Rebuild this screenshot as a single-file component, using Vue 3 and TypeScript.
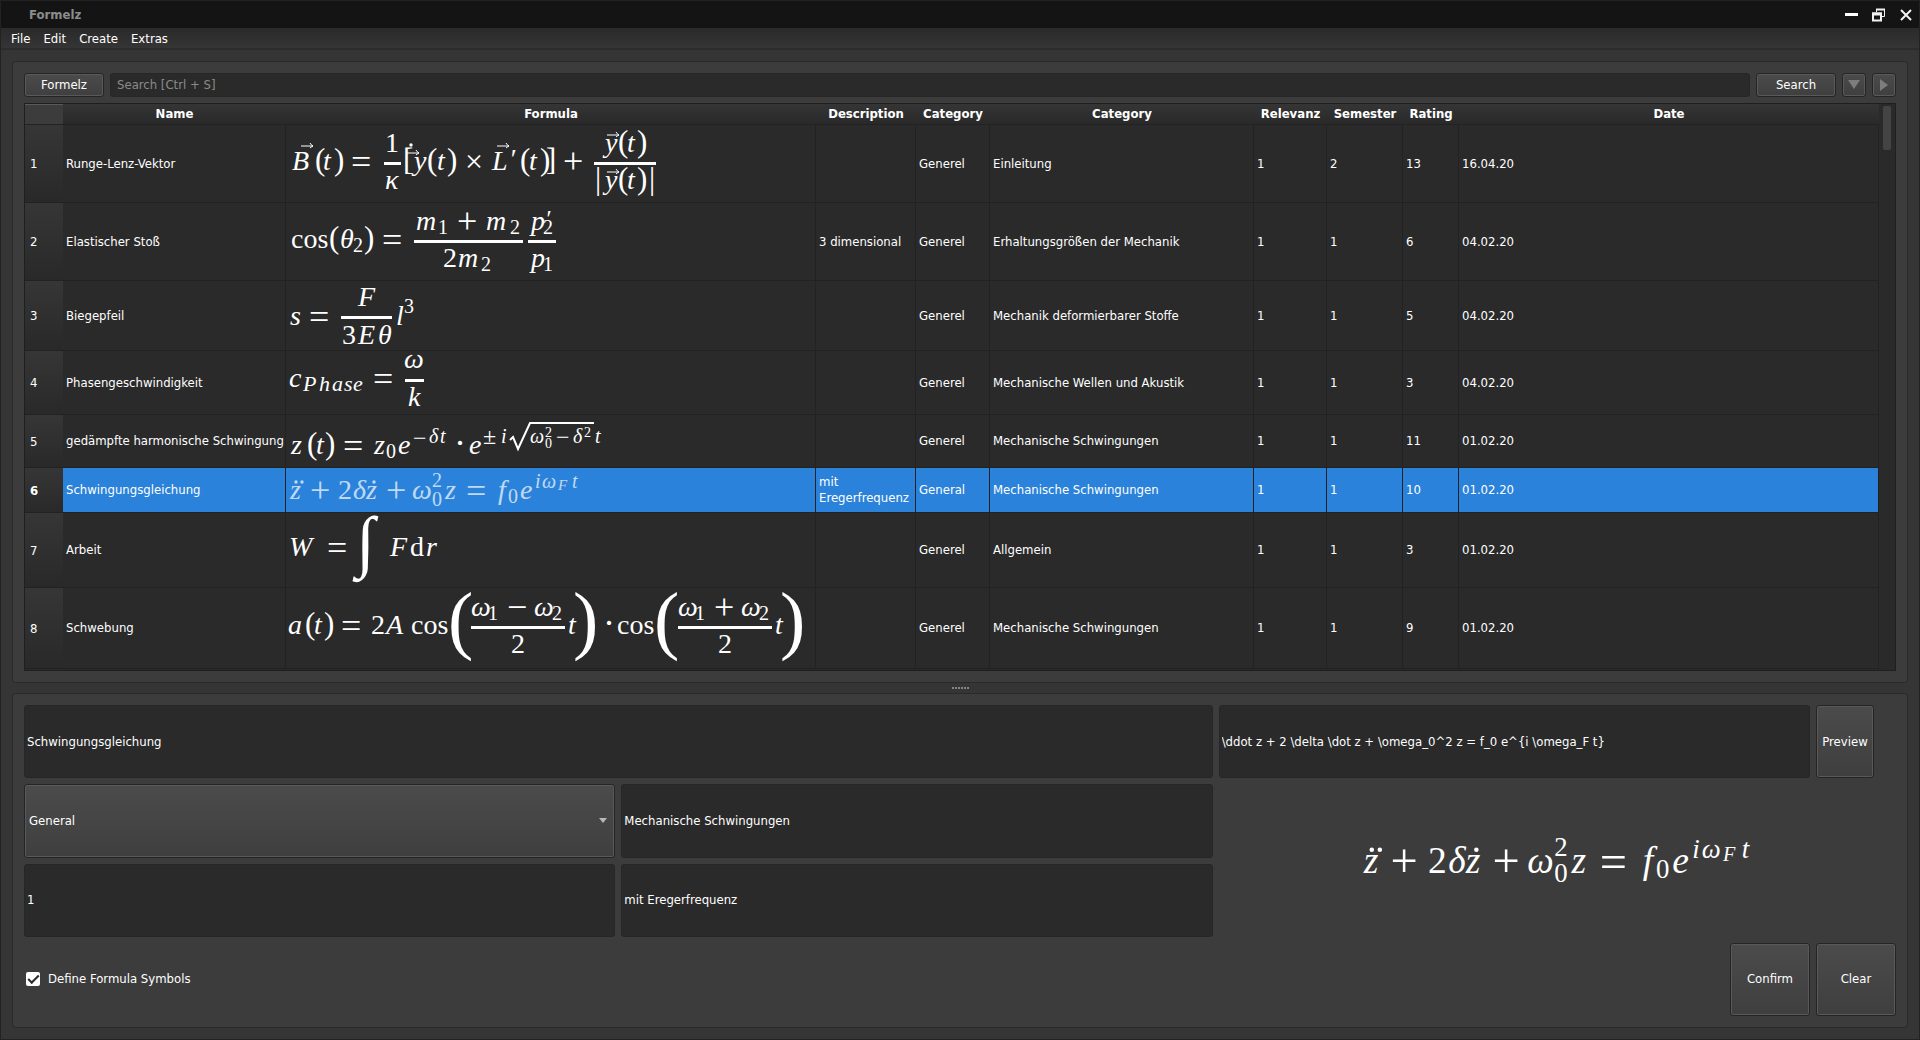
<script setup lang="ts">
import { computed, ref } from 'vue'

interface Glyph {
  kind: 'it' | 'up'
  text: string
  x: number
  y: number
  size: number
}

interface Formula {
  glyphs: Glyph[]
  bars?: [number, number, number][]
  vectors?: [number, number][]
  dots?: [number, number][]
  root?: string
}

interface Entry {
  name: string
  formula: Formula
  height: number
  description: string
  area: string
  category: string
  relevance: number
  semester: number
  rating: number
  date: string
}

const it = (text: string, x: number, y: number, size = 28): Glyph => ({ kind: 'it', text, x, y, size })
const up = (text: string, x: number, y: number, size = 28): Glyph => ({ kind: 'up', text, x, y, size })
const op = (text: string, x: number, y: number): Glyph => up(text, x, y, 36)
const call = (open: number, arg: number, close: number, y: number): Glyph[] => [
  up('(', open, y, 31),
  it('t', arg, y),
  up(')', close, y, 31),
]

const rungeLenz: Formula = {
  glyphs: [
    it('B', 11, 45), ...call(34, 42, 53, 45), op('=', 70, 49),
    up('1', 104, 27), it('κ', 104, 64),
    up('[', 122, 45, 31), it('y', 133, 45), ...call(146, 156, 166, 45), up('×', 184, 47, 32),
    it('L', 211, 45), it('′', 228, 43), ...call(239, 248, 259, 45), up(']', 265, 45, 31),
    op('+', 282, 48),
    it('y', 324, 27), ...call(337, 346, 356, 27),
    up('|', 314, 64, 31), it('y', 324, 64), ...call(337, 346, 356, 64), up('|', 368, 64, 31),
  ],
  bars: [[103, 37, 17], [313, 37, 62]],
  vectors: [[20, 21], [126, 28], [216, 21], [326, 10], [326, 47]],
  dots: [[130, 20]],
}

const elasticImpact: Formula = {
  glyphs: [
    up('cos', 10, 45), up('(', 48, 45, 31), it('θ', 59, 45), up('2', 72, 49, 20), up(')', 83, 45, 31),
    op('=', 101, 49),
    it('m', 135, 27), up('1', 157, 31, 20), op('+', 176, 30), it('m', 205, 27), up('2', 229, 31, 20),
    up('2', 162, 64), it('m', 177, 64), up('2', 200, 68, 20),
    it('p', 250, 27), it('′', 264, 23, 24), up('2', 262, 31, 20),
    it('p', 250, 64), up('1', 262, 68, 20),
  ],
  bars: [[133, 37, 109], [247, 37, 28]],
}

const deflection: Formula = {
  glyphs: [
    it('s', 9, 44), op('=', 28, 48), it('F', 77, 25), up('3', 61, 63), it('E', 77, 63), it('θ', 97, 63),
    it('l', 115, 44), up('3', 123, 32, 20),
  ],
  bars: [[60, 35, 51]],
}

const phaseVelocity: Formula = {
  glyphs: [
    it('c', 8, 36), it('P', 22, 40, 22), it('h', 38, 40, 22), it('a', 51, 40, 22), it('s', 63, 40, 22),
    it('e', 72, 40, 22), op('=', 92, 40), it('ω', 123, 17), it('k', 127, 55),
  ],
  bars: [[124, 28, 19]],
}

const dampedOscillation: Formula = {
  glyphs: [
    it('z', 10, 39), ...call(26, 35, 44, 39), op('=', 62, 43), it('z', 93, 39), up('0', 105, 43, 20),
    it('e', 117, 39), up('−', 132, 31, 24), it('δ', 148, 28, 20), it('t', 159, 28, 20), op('·', 173, 40),
    it('e', 188, 39), up('±', 202, 29, 24), it('i', 220, 28, 20), it('ω', 249, 28, 20),
    up('2', 264, 22, 14), up('0', 264, 33, 14), up('−', 275, 30, 24), it('δ', 292, 28, 20),
    up('2', 303, 22, 14), it('t', 314, 28, 20),
  ],
  root: 'M229 25L232 22L237 34L249 8H313',
}

const oscillation: Formula = {
  glyphs: [
    it('z', 9, 31), op('+', 29, 34), up('2', 57, 31), it('δ', 72, 31), it('z', 85, 31), op('+', 105, 34),
    it('ω', 131, 31), up('2', 151, 19, 20), up('0', 151, 38, 20), it('z', 164, 31), op('=', 185, 35),
    it('f', 217, 31), up('0', 227, 35, 20), it('e', 239, 31), it('i', 254, 20, 20), it('ω', 261, 20, 20),
    it('F', 277, 22, 15), it('t', 291, 20, 20),
  ],
  dots: [[15, 14], [21, 14], [93, 14]],
}

const work: Formula = {
  glyphs: [
    it('W', 8, 43), op('=', 46, 47), it('∫', 75, 51, 68), it('F', 109, 43), up('d', 129, 43), it('r', 145, 43),
  ],
}

const beat: Formula = {
  glyphs: [
    it('a', 7, 46), ...call(24, 33, 43, 46), op('=', 60, 50), up('2', 90, 46), it('A', 105, 46), up('cos', 130, 46),
    up('(', 167, 57, 76), it('ω', 190, 28), up('1', 207, 32, 20), op('−', 226, 31), it('ω', 253, 28),
    up('2', 271, 32, 20), up('2', 230, 65), it('t', 287, 46), up(')', 292, 57, 76),
    op('·', 322, 47), up('cos', 336, 46),
    up('(', 373, 57, 76), it('ω', 397, 28), up('1', 414, 32, 20), op('+', 433, 31), it('ω', 460, 28),
    up('2', 478, 32, 20), up('2', 437, 65), it('t', 494, 46), up(')', 499, 57, 76),
  ],
  bars: [[190, 38, 94], [397, 38, 94]],
}

const entries: Entry[] = [
  { name: 'Runge-Lenz-Vektor', formula: rungeLenz, height: 78, description: '', area: 'Generel', category: 'Einleitung', relevance: 1, semester: 2, rating: 13, date: '16.04.20' },
  { name: 'Elastischer Stoß', formula: elasticImpact, height: 78, description: '3 dimensional', area: 'Generel', category: 'Erhaltungsgrößen der Mechanik', relevance: 1, semester: 1, rating: 6, date: '04.02.20' },
  { name: 'Biegepfeil', formula: deflection, height: 70, description: '', area: 'Generel', category: 'Mechanik deformierbarer Stoffe', relevance: 1, semester: 1, rating: 5, date: '04.02.20' },
  { name: 'Phasengeschwindigkeit', formula: phaseVelocity, height: 64, description: '', area: 'Generel', category: 'Mechanische Wellen und Akustik', relevance: 1, semester: 1, rating: 3, date: '04.02.20' },
  { name: 'gedämpfte harmonische Schwingung', formula: dampedOscillation, height: 53, description: '', area: 'Generel', category: 'Mechanische Schwingungen', relevance: 1, semester: 1, rating: 11, date: '01.02.20' },
  { name: 'Schwingungsgleichung', formula: oscillation, height: 45, description: 'mit Eregerfrequenz', area: 'General', category: 'Mechanische Schwingungen', relevance: 1, semester: 1, rating: 10, date: '01.02.20' },
  { name: 'Arbeit', formula: work, height: 75, description: '', area: 'Generel', category: 'Allgemein', relevance: 1, semester: 1, rating: 3, date: '01.02.20' },
  { name: 'Schwebung', formula: beat, height: 81, description: '', area: 'Generel', category: 'Mechanische Schwingungen', relevance: 1, semester: 1, rating: 9, date: '01.02.20' },
]

const columns = ['Name', 'Formula', 'Description', 'Category', 'Category', 'Relevanz', 'Semester', 'Rating', 'Date']
const menus = ['File', 'Edit', 'Create', 'Extras']

const selected = ref(5)
const query = ref('')
const name = ref('Schwingungsgleichung')
const latex = ref('\\ddot z + 2 \\delta \\dot z + \\omega_0^2 z = f_0 e^{i \\omega_F t}')
const area = ref('General')
const category = ref('Mechanische Schwingungen')
const relevance = ref('1')
const description = ref('mit Eregerfrequenz')
const defineSymbols = ref(true)
const preview = computed(() => entries[selected.value].formula)
</script>

<template>
  <div class="window">
    <header class="titlebar">
      <span class="title">Formelz</span>
      <div class="controls">
        <button type="button" aria-label="Minimize">
          <svg width="14" height="14" viewBox="0 0 14 14"><path d="M0 5h13v3H0z" fill="#fff" /></svg>
        </button>
        <button type="button" aria-label="Restore">
          <svg width="14" height="14" viewBox="0 0 14 14" fill="none" stroke="#f2f2f2">
            <path d="M4.500 4V1.500h8v7H10" stroke-width="1" /><path d="M4 1.500h9" stroke-width="2" />
            <path d="M1 5.500h8v7H1z" stroke-width="2" /><path d="M0 6h10" stroke-width="3" />
          </svg>
        </button>
        <button type="button" aria-label="Close">
          <svg width="14" height="14" viewBox="0 0 14 14"><path d="M2 2l10 10M12 2L2 12" stroke="#f2f2f2" stroke-width="2" /></svg>
        </button>
      </div>
    </header>

    <nav class="menubar">
      <button v-for="menu in menus" :key="menu" type="button">{{ menu }}</button>
    </nav>

    <main class="content">
      <section class="panel">
        <div class="toolbar">
          <button type="button" class="btn wide">Formelz</button>
          <input v-model="query" class="field search" type="text" placeholder="Search [Ctrl + S]" aria-label="Search" />
          <button type="button" class="btn wide">Search</button>
          <button type="button" class="btn small" aria-label="Sort down">
            <svg width="12" height="10" viewBox="0 0 12 10"><path d="M0 0h12L6 9z" fill="#7d7d7d" /></svg>
          </button>
          <button type="button" class="btn small" aria-label="Next">
            <svg width="8" height="12" viewBox="0 0 8 12"><path d="M0 0v12L8 6z" fill="#7d7d7d" /></svg>
          </button>
        </div>

        <div class="table-view">
          <table>
            <colgroup>
              <col class="c-num" /><col class="c-name" /><col class="c-formula" /><col class="c-desc" />
              <col class="c-area" /><col class="c-cat" /><col class="c-rel" /><col class="c-sem" />
              <col class="c-rating" /><col />
            </colgroup>
            <thead>
              <tr>
                <td class="corner"></td>
                <th v-for="(column, i) in columns" :key="i" scope="col">{{ column }}</th>
              </tr>
            </thead>
            <tbody>
              <tr
                v-for="(entry, i) in entries"
                :key="entry.name"
                :class="{ selected: i === selected }"
                :style="{ height: entry.height + 'px' }"
                @click="selected = i"
              >
                <th scope="row">{{ i + 1 }}</th>
                <td class="name-cell">{{ entry.name }}</td>
                <td class="formula-cell">
                  <svg class="formula" width="529" :height="entry.height - 1" :viewBox="`5 0 529 ${entry.height - 1}`">
                    <text
                      v-for="(g, n) in entry.formula.glyphs"
                      :key="n"
                      :class="g.kind"
                      :x="g.x"
                      :y="g.y"
                      :font-size="g.size"
                    >{{ g.text }}</text>
                    <rect v-for="(b, n) in entry.formula.bars" :key="'b' + n" :x="b[0]" :y="b[1]" :width="b[2]" height="3" />
                    <path
                      v-for="(v, n) in entry.formula.vectors"
                      :key="'v' + n"
                      class="stroke"
                      :d="`M${v[0]} ${v[1]}h12m-3 -3q1 2 3 3q-2 1 -3 2`"
                    />
                    <circle v-for="(d, n) in entry.formula.dots" :key="'d' + n" :cx="d[0]" :cy="d[1]" r="1.7" />
                    <path v-if="entry.formula.root" class="stroke root" :d="entry.formula.root" />
                  </svg>
                </td>
                <td>{{ entry.description }}</td>
                <td>{{ entry.area }}</td>
                <td>{{ entry.category }}</td>
                <td>{{ entry.relevance }}</td>
                <td>{{ entry.semester }}</td>
                <td>{{ entry.rating }}</td>
                <td>{{ entry.date }}</td>
              </tr>
            </tbody>
          </table>
          <div class="scrollbar"><div class="thumb"></div></div>
        </div>
      </section>

      <div class="splitter"><i v-for="n in 6" :key="n"></i></div>

      <section class="panel editor">
        <form class="form" @submit.prevent>
          <input v-model="name" class="field span2" type="text" aria-label="Name" />
          <input v-model="latex" class="field" type="text" aria-label="Formula" />
          <button type="button" class="btn preview-btn">Preview</button>

          <div class="combo">
            <select v-model="area" class="btn" aria-label="Area">
              <option>General</option>
              <option>Generel</option>
            </select>
            <svg width="8" height="5" viewBox="0 0 8 5"><path d="M0 0h8L4 5z" fill="#b8b8b8" /></svg>
          </div>
          <input v-model="category" class="field" type="text" aria-label="Category" />
          <div class="preview">
            <svg class="formula" width="393" height="59" viewBox="8 0 291 44">
              <text
                v-for="(g, n) in preview.glyphs"
                :key="n"
                :class="g.kind"
                :x="g.x"
                :y="g.y"
                :font-size="g.size"
              >{{ g.text }}</text>
              <circle v-for="(d, n) in preview.dots" :key="'d' + n" :cx="d[0]" :cy="d[1]" r="1.7" />
            </svg>
          </div>

          <input v-model="relevance" class="field" type="text" aria-label="Relevance" />
          <input v-model="description" class="field" type="text" aria-label="Description" />

          <label class="check">
            <input v-model="defineSymbols" type="checkbox" />
            <span>Define Formula Symbols</span>
          </label>
          <button type="submit" class="btn confirm">Confirm</button>
          <button type="reset" class="btn">Clear</button>
        </form>
      </section>
    </main>
  </div>
</template>

<style>
body {
  margin: 0;
  background: #353535;
}
</style>

<style scoped>
* {
  box-sizing: border-box;
}
.window {
  display: flex;
  flex-direction: column;
  min-height: 100vh;
  border: 1px solid #222;
  background: #353535;
  color: #fff;
  font: 13px/16px "DejaVu Sans Condensed", "DejaVu Sans", sans-serif;
}
button,
input,
select {
  margin: 0;
  color: inherit;
  font: inherit;
}
.titlebar {
  display: flex;
  align-items: center;
  justify-content: space-between;
  height: 27px;
  padding: 0 6px 0 28px;
  background: #141414;
}
.title {
  color: #8c8c8c;
  font-weight: bold;
}
.controls {
  display: flex;
  gap: 13px;
}
.controls button {
  display: flex;
  padding: 0;
  border: 0;
  background: none;
}
.menubar {
  display: flex;
  gap: 13px;
  height: 22px;
  padding: 2px 10px 0;
  border-bottom: 2px solid #2c2c2c;
  background: linear-gradient(#2a2a2a, #353535);
}
.menubar button {
  padding: 0;
  border: 0;
  background: none;
}
.content {
  display: flex;
  flex: 1;
  flex-direction: column;
  padding: 11px;
}
.panel {
  padding: 11px;
  border: 1px solid #2a2a2a;
  border-radius: 4px;
  background: #3c3c3c;
}
.toolbar {
  display: flex;
  gap: 6px;
  height: 24px;
  margin-bottom: 6px;
}
.btn {
  padding: 0;
  border: 1px solid #252525;
  border-radius: 3px;
  background: linear-gradient(#4b4b4b, #3f3f3f);
  box-shadow: inset 0 0 0 1px #595959;
}
.wide {
  width: 80px;
}
.small {
  display: flex;
  align-items: center;
  justify-content: center;
  width: 24px;
}
.field {
  min-width: 0;
  padding: 0 2px;
  border: 1px solid #262626;
  border-radius: 3px;
  background: #2a2a2a;
  outline: 0;
}
.search {
  flex: 1;
  padding: 0 6px;
}
.search::placeholder {
  color: #8a8a8a;
  opacity: 1;
}
.table-view {
  display: flex;
  padding-bottom: 1px;
  border: 1px solid #1f1f1f;
  background: #2a2a2a;
}
table {
  flex: 1;
  width: 0;
  table-layout: fixed;
  border-spacing: 0;
}
.c-num { width: 38px; }
.c-name { width: 223px; }
.c-formula { width: 530px; }
.c-desc { width: 100px; }
.c-area { width: 74px; }
.c-cat { width: 264px; }
.c-rel { width: 73px; }
.c-sem { width: 76px; }
.c-rating { width: 56px; }
thead tr {
  height: 21px;
}
thead th,
.corner {
  padding: 0;
  border-bottom: 1px solid #222;
  background: linear-gradient(#353535, #292929);
}
.corner {
  border-top: 1px solid #5a5a5a;
  background: #3c3c3c;
}
tbody th {
  padding: 1px 0 0 5px;
  border-bottom: 1px solid #222;
  background: linear-gradient(#363636, #292929);
  font-weight: normal;
  text-align: left;
}
tbody td {
  padding: 0 2px 0 3px;
  border-right: 1px solid #222;
  border-bottom: 1px solid #222;
}
tbody .name-cell {
  padding-right: 0;
  white-space: nowrap;
}
.selected td {
  background: #2a82da;
}
.selected th {
  font-weight: bold;
}
tbody .formula-cell {
  padding: 0;
}
.formula {
  display: block;
  overflow: visible;
  fill: #fff;
  font-family: "Liberation Serif", serif;
}
.selected .formula {
  opacity: 0.7;
}
.it {
  font-style: italic;
}
.stroke {
  fill: none;
  stroke: #fff;
  stroke-width: 1;
}
.root {
  stroke-width: 2;
}
.scrollbar {
  width: 16px;
  padding: 2px 4px;
}
.thumb {
  width: 8px;
  height: 44px;
  border-radius: 2px;
  background: #444;
}
.splitter {
  display: flex;
  align-items: center;
  justify-content: center;
  gap: 1px;
  height: 10px;
}
.splitter i {
  width: 2px;
  height: 2px;
  background: #858585;
}
.editor {
  display: flex;
  flex: 1;
}
.form {
  display: grid;
  flex: 1;
  grid-template-columns: 1fr 1fr 1fr 80px;
  grid-template-rows: repeat(4, minmax(40px, 1fr));
  gap: 6px;
}
.span2 {
  grid-column: span 2;
}
.preview-btn {
  width: 58px;
}
.combo {
  display: grid;
}
.combo select,
.combo svg {
  grid-area: 1 / 1;
}
.combo select {
  padding: 0 4px;
  appearance: none;
}
.combo svg {
  align-self: center;
  justify-self: end;
  margin-right: 8px;
  pointer-events: none;
}
.preview {
  display: flex;
  grid-column: 3 / 5;
  grid-row: 2 / 4;
  align-items: center;
  justify-content: center;
}
.check {
  display: flex;
  grid-column: span 2;
  align-items: center;
  gap: 8px;
  padding-left: 2px;
}
.check input {
  display: grid;
  width: 14px;
  height: 14px;
  border-radius: 2px;
  background: #fff;
  appearance: none;
  place-items: center;
}
.check input:checked::before {
  width: 9px;
  height: 4px;
  border: solid #2a2a2a;
  border-width: 0 0 2px 2px;
  margin-bottom: 3px;
  content: "";
  rotate: -45deg;
}
.confirm {
  justify-self: end;
  width: 80px;
}
</style>
